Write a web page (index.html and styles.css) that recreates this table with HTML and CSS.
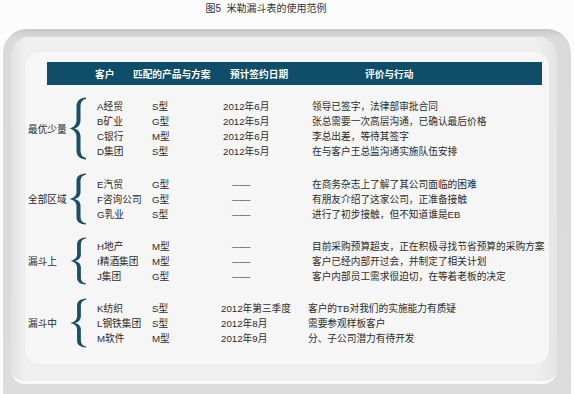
FILE: index.html
```html
<!DOCTYPE html>
<html lang="zh-CN">
<head>
<meta charset="utf-8">
<title>米勒漏斗表的使用范例</title>
<link rel="stylesheet" href="styles.css">
</head>
<body>
<div class="caption">图5&nbsp;&nbsp;米勒漏斗表的使用范例</div>
<div class="bezel">
  <div class="bevel">
    <div class="panel">
      <div class="head">
        <span class="h1">客户</span>
        <span class="h2">匹配的产品与方案</span>
        <span class="h3">预计签约日期</span>
        <span class="h4">评价与行动</span>
      </div>

      <div class="group g1">
        <div class="label">最优少量</div>
        <svg class="brace" viewBox="0 0 20 60" preserveAspectRatio="none"><path d="M18,0.5 C12,1 8.5,3.5 8.5,9 L8.5,22 C8.5,26 6,29 1.5,30 C6,31 8.5,34 8.5,38 L8.5,51 C8.5,56.5 12,59 18,59.5 L18,58 C14.5,57.5 12.5,55 12.5,50 L12.5,38 C12.5,34 10.5,31 6.5,30 C10.5,29 12.5,26 12.5,22 L12.5,10 C12.5,5 14.5,2.5 18,2 Z"/></svg>
        <div class="rows">
          <span>A经贸</span><span>S型</span><span>2012年6月</span><span>领导已签字，法律部审批合同</span>
          <span>B矿业</span><span>G型</span><span>2012年5月</span><span>张总需要一次高层沟通，已确认最后价格</span>
          <span>C银行</span><span>M型</span><span>2012年6月</span><span>李总出差，等待其签字</span>
          <span>D集团</span><span>S型</span><span>2012年5月</span><span>在与客户王总监沟通实施队伍安排</span>
        </div>
      </div>

      <div class="group g2">
        <div class="label">全部区域</div>
        <svg class="brace" viewBox="0 0 20 60" preserveAspectRatio="none"><path d="M18,0.5 C12,1 8.5,3.5 8.5,9 L8.5,22 C8.5,26 6,29 1.5,30 C6,31 8.5,34 8.5,38 L8.5,51 C8.5,56.5 12,59 18,59.5 L18,58 C14.5,57.5 12.5,55 12.5,50 L12.5,38 C12.5,34 10.5,31 6.5,30 C10.5,29 12.5,26 12.5,22 L12.5,10 C12.5,5 14.5,2.5 18,2 Z"/></svg>
        <div class="rows">
          <span>E汽贸</span><span>G型</span><span class="dash">——</span><span>在商务杂志上了解了其公司面临的困难</span>
          <span>F咨询公司</span><span>G型</span><span class="dash">——</span><span>有朋友介绍了这家公司，正准备接触</span>
          <span>G乳业</span><span>S型</span><span class="dash">——</span><span>进行了初步接触，但不知道谁是EB</span>
        </div>
      </div>

      <div class="group g3">
        <div class="label">漏斗上</div>
        <svg class="brace" viewBox="0 0 20 60" preserveAspectRatio="none"><path d="M18,0.5 C12,1 8.5,3.5 8.5,9 L8.5,22 C8.5,26 6,29 1.5,30 C6,31 8.5,34 8.5,38 L8.5,51 C8.5,56.5 12,59 18,59.5 L18,58 C14.5,57.5 12.5,55 12.5,50 L12.5,38 C12.5,34 10.5,31 6.5,30 C10.5,29 12.5,26 12.5,22 L12.5,10 C12.5,5 14.5,2.5 18,2 Z"/></svg>
        <div class="rows">
          <span>H地产</span><span>M型</span><span class="dash">——</span><span>目前采购预算超支，正在积极寻找节省预算的采购方案</span>
          <span>I精酒集团</span><span>M型</span><span class="dash">——</span><span>客户已经内部开过会，并制定了相关计划</span>
          <span>J集团</span><span>G型</span><span class="dash">——</span><span>客户内部员工需求很迫切，在等着老板的决定</span>
        </div>
      </div>

      <div class="group g4">
        <div class="label">漏斗中</div>
        <svg class="brace" viewBox="0 0 20 60" preserveAspectRatio="none"><path d="M18,0.5 C12,1 8.5,3.5 8.5,9 L8.5,22 C8.5,26 6,29 1.5,30 C6,31 8.5,34 8.5,38 L8.5,51 C8.5,56.5 12,59 18,59.5 L18,58 C14.5,57.5 12.5,55 12.5,50 L12.5,38 C12.5,34 10.5,31 6.5,30 C10.5,29 12.5,26 12.5,22 L12.5,10 C12.5,5 14.5,2.5 18,2 Z"/></svg>
        <div class="rows">
          <span>K纺织</span><span>S型</span><span>2012年第三季度</span><span>客户的TB对我们的实施能力有质疑</span>
          <span>L钢铁集团</span><span>S型</span><span>2012年8月</span><span>需要参观样板客户</span>
          <span>M软件</span><span>M型</span><span>2012年9月</span><span>分、子公司潜力有待开发</span>
        </div>
      </div>
    </div>
  </div>
</div>
</body>
</html>
```

FILE: styles.css
```css
* { box-sizing: border-box; }

html, body {
  margin: 0;
  padding: 0;
  height: 394px;
  overflow: hidden;
  background: #fcfcfc;
  font-family: "Liberation Sans", "Noto Sans CJK SC", sans-serif;
  color: #2b2b2b;
}

.caption {
  height: 29px;
  padding: 3px 42px 0 0;
  text-align: center;
  font-size: 10px;
  line-height: 12px;
  color: #333;
}

.bezel {
  margin: 0 3px;
  height: 365px;
  overflow: hidden;
  padding: 8px 14px 0 8px;
  border-radius: 24px 24px 0 0;
  background: linear-gradient(to bottom, #c6c6c6 0px, #dadada 8px, #dcdcdc 100%);
}

.bevel {
  padding: 15px 8px 17px 14px;
  border-radius: 18px 18px 14px 14px;
  background: linear-gradient(to right, #e2e2e2 0px, #efefef 14px, #efefef 96%, #e4e4e4 100%);
  border-bottom: 3px solid #fafafa;
}

.panel {
  height: 312px;
  padding: 10px 0 0 0;
  border-radius: 14px;
  background: #f6f6f6;
  box-shadow: 0 0 2px rgba(0, 0, 0, 0.06);
}

.head {
  display: flex;
  align-items: center;
  height: 23px;
  margin: 0 7px 0 22px;
  padding-left: 48px;
  background: #0f4d68;
  color: #fff;
  font-weight: bold;
  font-size: 9.7px;
}
.h1 { width: 38px; }
.h2 { width: 97px; }
.h3 { width: 135px; }

.group {
  display: flex;
  align-items: stretch;
}
.g1 { margin-top: 12px; height: 63px; }
.g2 { margin-top: 13px; height: 52px; }
.g3 { margin-top: 12px; height: 48px; }
.g4 { margin-top: 13px; height: 50px; }

.label {
  align-self: center;
  width: 43px;
  padding-left: 3px;
  font-size: 9.7px;
  white-space: nowrap;
}

.brace {
  width: 20px;
  height: 100%;
  fill: #1b4f66;
}
.g3 .brace, .g4 .brace { margin-left: 1px; width: 19px; }

.rows {
  align-self: center;
  margin-left: 9px;
  display: grid;
  grid-template-columns: 55px 71px 89px auto;
  font-size: 9.7px;
  line-height: 15px;
  white-space: nowrap;
}
.g4 .rows { grid-template-columns: 55px 69px 87px auto; }

.dash {
  padding-left: 9px;
  font-family: "Liberation Sans", sans-serif;
  letter-spacing: -1px;
}
```
